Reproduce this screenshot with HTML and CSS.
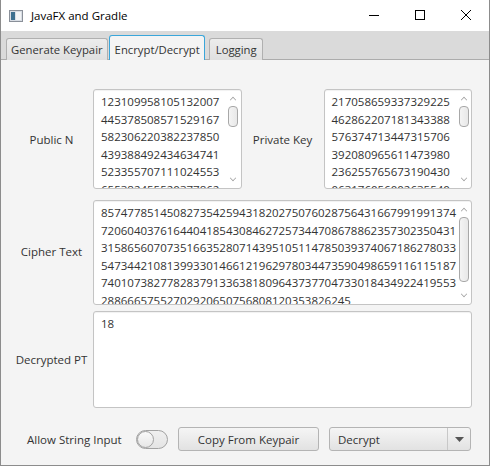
FILE: index.html
```html
<!DOCTYPE html>
<html>
<head>
<meta charset="utf-8">
<link rel="stylesheet" href="styles.css">
</head>
<body>
<div class="window">
  <div class="titlebar">
    <svg class="appicon" width="14" height="12" viewBox="0 0 14 12">
      <rect x="0.5" y="0.5" width="13" height="11" fill="#d8dde4" stroke="#8a9099"/>
      <rect x="2" y="2" width="4" height="8" fill="#3c6f8f"/>
      <rect x="7" y="2" width="5" height="8" fill="#f2f4f6"/>
    </svg>
    <span class="title">JavaFX and Gradle</span>
    <div class="controls">
      <svg width="46" height="31" viewBox="0 0 46 31"><line x1="18" y1="15.5" x2="28" y2="15.5" stroke="#000" stroke-width="1"/></svg>
      <svg width="46" height="31" viewBox="0 0 46 31"><rect x="18.5" y="10.5" width="9" height="9" fill="none" stroke="#000" stroke-width="1"/></svg>
      <svg width="46" height="31" viewBox="0 0 46 31"><path d="M18 10 L28 20 M28 10 L18 20" stroke="#000" stroke-width="1"/></svg>
    </div>
  </div>
  <div class="tabbar">
    <div class="tab">Generate Keypair</div>
    <div class="tab selected">Encrypt/Decrypt</div>
    <div class="tab last">Logging</div>
  </div>
  <div class="content">
    <div class="row row1">
      <div class="label">Public N</div>
      <div class="area small">
        <div class="text">123109958105132007<br>445378508571529167<br>582306220382237850<br>439388492434634741<br>523355707111024553<br>655382455520377862</div>
        <div class="sbar"><span class="up"></span><span class="thumb"></span><span class="down"></span></div>
      </div>
      <div class="label lbl2">Private Key</div>
      <div class="area small">
        <div class="text">217058659337329225<br>462862207181343388<br>576374713447315706<br>392080965611473980<br>236255765673190430<br>063176056002635540</div>
        <div class="sbar"><span class="up"></span><span class="thumb"></span><span class="down"></span></div>
      </div>
    </div>
    <div class="row row2">
      <div class="label">Cipher Text</div>
      <div class="area wide">
        <div class="text">857477851450827354259431820275076028756431667991991374<br>720604037616440418543084627257344708678862357302350431<br>315865607073516635280714395105114785039374067186278033<br>547344210813993301466121962978034473590498659116115187<br>740107382778283791336381809643737704733018434922419553<br>28866657552702920650756808120353826245</div>
        <div class="sbar"><span class="up"></span><span class="thumb long"></span><span class="down"></span></div>
      </div>
    </div>
    <div class="row row3">
      <div class="label">Decrypted PT</div>
      <div class="area wide">
        <div class="text">18</div>
      </div>
    </div>
    <div class="bottom">
      <span class="blabel">Allow String Input</span>
      <span class="toggle"><span class="knob"></span></span>
      <span class="button">Copy From Keypair</span>
      <span class="combo"><span class="ctext">Decrypt</span><span class="carrow"><svg width="9" height="5" viewBox="0 0 9 5"><path d="M0 0 H9 L4.5 5 Z" fill="#555"/></svg></span></span>
    </div>
  </div>
</div>
</body>
</html>
```

FILE: styles.css
```css
html, body {
  margin: 0;
  padding: 0;
}
body {
  width: 490px;
  height: 466px;
  overflow: hidden;
  font-family: "Open Sans", "Noto Sans", sans-serif;
  font-size: 11.5px;
  color: #333;
}
.window {
  width: 490px;
  height: 466px;
  box-sizing: border-box;
  border: 1px solid #8c8c8c;
  border-top: none;
  display: flex;
  flex-direction: column;
  background: #f4f4f4;
}
.titlebar {
  height: 31px;
  background: #fff;
  display: flex;
  align-items: center;
  flex: none;
}
.appicon {
  margin-left: 8px;
  margin-top: 1px;
}
.title {
  margin-left: 8px;
  font-size: 11.5px;
  color: #000;
}
.controls {
  margin-left: auto;
  display: flex;
  align-self: flex-start;
}
.controls svg { display: block; }
.tabbar {
  height: 29px;
  background: #dadada;
  border-bottom: 1px solid #acacac;
  display: flex;
  align-items: flex-end;
  padding-left: 5px;
  gap: 1px;
  flex: none;
  box-sizing: border-box;
}
.tab {
  height: 22px;
  box-sizing: border-box;
  padding: 0 4px;
  border: 1px solid #b0b0b0;
  border-bottom: none;
  border-radius: 3px 3px 0 0;
  background: linear-gradient(#ececec, #e0e0e0);
  display: flex;
  align-items: center;
  margin-bottom: -1px;
  font-size: 11.3px;
}
.tab.selected {
  height: 25px;
  background: #f4f4f4;
  border: 1px solid #3aa6da;
  border-bottom: none;
  margin-right: 3px;
  padding: 3px 4px 0 5px;
}
.tab.last { padding: 0 5px 0 6px; }
.content {
  flex: 1;
  padding: 29px 17px 0 9px;
  display: flex;
  flex-direction: column;
}
.row {
  display: flex;
  flex: none;
}
.row1 { height: 100px; }
.row2 { height: 105px; margin-top: 11px; }
.row3 { height: 97px; margin-top: 6px; }
.label {
  width: 83px;
  flex: none;
  display: flex;
  align-items: center;
  justify-content: center;
}
.row2 .label { padding-bottom: 3px; box-sizing: border-box; }
.lbl2 { width: 82px; }
.area {
  background: #fff;
  border: 1px solid #c4c4c4;
  border-radius: 3px;
  box-sizing: border-box;
  display: flex;
  overflow: hidden;
  box-shadow: inset 0 1px 1px rgba(0,0,0,0.06);
}
.small { width: 149px; }
.wide { width: 381px; }
.text {
  flex: 1;
  padding: 3px 0 0 7px;
  line-height: 17.5px;
  white-space: nowrap;
  overflow: hidden;
  color: #333;
}
.sbar {
  width: 13px;
  flex: none;
  margin: 1px 1px 1px 0;
  display: flex;
  flex-direction: column;
  align-items: center;
  background: #fff;
}
.up, .down {
  display: block;
  flex: none;
  width: 6px;
  height: 6px;
  box-sizing: border-box;
}
.up {
  border-left: 1px solid #9a9a9a;
  border-top: 1px solid #9a9a9a;
  transform: rotate(45deg) scale(0.75);
  margin-top: 6px;
}
.down {
  margin-top: auto;
  margin-bottom: 6px;
  border-right: 1px solid #9a9a9a;
  border-bottom: 1px solid #9a9a9a;
  transform: rotate(45deg) scale(0.75);
}
.thumb {
  display: block;
  width: 10px;
  height: 21px;
  margin-top: 3px;
  border: 1px solid #a8a8a8;
  border-radius: 4px;
  box-sizing: border-box;
  background: linear-gradient(90deg, #f4f4f4, #e8e8e8);
}
.thumb.long { height: 65px; }
.bottom {
  margin-top: 19px;
  height: 24px;
  display: flex;
  align-items: center;
  padding-left: 17px;
}
.blabel { width: 109px; }
.toggle {
  width: 32px;
  height: 19px;
  box-sizing: border-box;
  border: 1px solid #a2a2a2;
  border-radius: 10px;
  background: linear-gradient(#f0f0f0, #e4e4e4);
  position: relative;
  display: block;
}
.knob {
  position: absolute;
  left: 0;
  top: 0;
  width: 17px;
  height: 17px;
  box-sizing: border-box;
  border: 1px solid #a2a2a2;
  border-radius: 50%;
  background: linear-gradient(#fafafa, #e6e6e6);
}
.button {
  margin-left: 10px;
  width: 141px;
  height: 24px;
  box-sizing: border-box;
  border: 1px solid #b4b4b4;
  border-radius: 3px;
  background: linear-gradient(#f5f5f5, #e2e2e2);
  display: flex;
  align-items: center;
  justify-content: center;
}
.combo {
  margin-left: 10px;
  width: 142px;
  height: 24px;
  box-sizing: border-box;
  border: 1px solid #b4b4b4;
  border-radius: 3px;
  background: linear-gradient(#f5f5f5, #e2e2e2);
  display: flex;
  align-items: center;
}
.ctext {
  flex: 1;
  padding-left: 8px;
}
.carrow {
  width: 22px;
  height: 100%;
  border-left: 1px solid #c8c8c8;
  display: flex;
  align-items: center;
  justify-content: center;
}
.carrow svg { display: block; }
```
